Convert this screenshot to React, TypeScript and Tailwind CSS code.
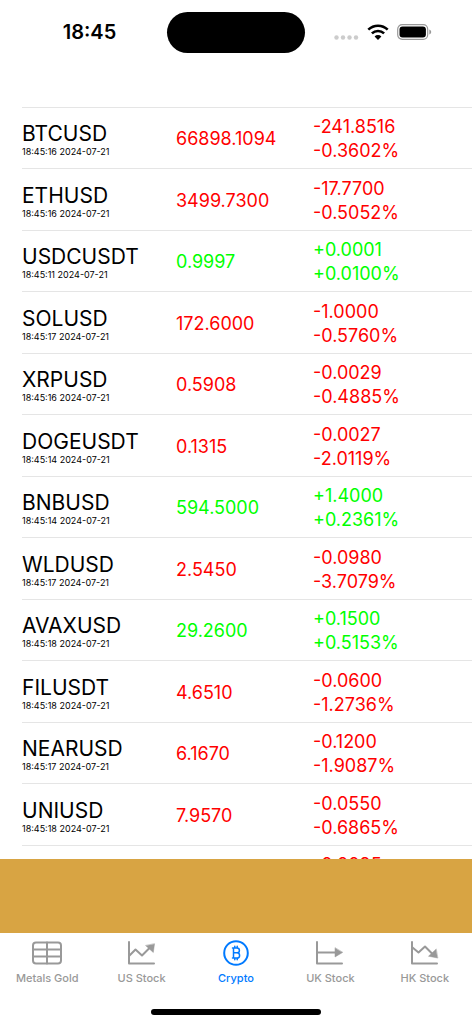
import { useState } from "react";
import type { ReactNode } from "react";
import { clsx } from "clsx";

interface Quote {
  symbol: string;
  time: string;
  price: string;
  change: string;
  percent: string;
}

const quotes: Quote[] = [
  { symbol: "BTCUSD", time: "18:45:16 2024-07-21", price: "66898.1094", change: "-241.8516", percent: "-0.3602%" },
  { symbol: "ETHUSD", time: "18:45:16 2024-07-21", price: "3499.7300", change: "-17.7700", percent: "-0.5052%" },
  { symbol: "USDCUSDT", time: "18:45:11 2024-07-21", price: "0.9997", change: "+0.0001", percent: "+0.0100%" },
  { symbol: "SOLUSD", time: "18:45:17 2024-07-21", price: "172.6000", change: "-1.0000", percent: "-0.5760%" },
  { symbol: "XRPUSD", time: "18:45:16 2024-07-21", price: "0.5908", change: "-0.0029", percent: "-0.4885%" },
  { symbol: "DOGEUSDT", time: "18:45:14 2024-07-21", price: "0.1315", change: "-0.0027", percent: "-2.0119%" },
  { symbol: "BNBUSD", time: "18:45:14 2024-07-21", price: "594.5000", change: "+1.4000", percent: "+0.2361%" },
  { symbol: "WLDUSD", time: "18:45:17 2024-07-21", price: "2.5450", change: "-0.0980", percent: "-3.7079%" },
  { symbol: "AVAXUSD", time: "18:45:18 2024-07-21", price: "29.2600", change: "+0.1500", percent: "+0.5153%" },
  { symbol: "FILUSDT", time: "18:45:18 2024-07-21", price: "4.6510", change: "-0.0600", percent: "-1.2736%" },
  { symbol: "NEARUSD", time: "18:45:17 2024-07-21", price: "6.1670", change: "-0.1200", percent: "-1.9087%" },
  { symbol: "UNIUSD", time: "18:45:18 2024-07-21", price: "7.9570", change: "-0.0550", percent: "-0.6865%" },
  { symbol: "DOTUSD", time: "18:45:18 2024-07-21", price: "6.1095", change: "-0.0095", percent: "-0.1552%" },
];

function TabIcon({ children }: { children: ReactNode }) {
  return (
    <svg viewBox="0 0 32 28" className="h-7 w-8" fill="none" stroke="currentColor" strokeWidth="2" strokeLinecap="round" strokeLinejoin="round" aria-hidden="true">
      {children}
    </svg>
  );
}

const tabs = [
  {
    label: "Metals Gold",
    icon: (
      <TabIcon>
        <rect x="2" y="3.500" width="28" height="21" rx="3" />
        <path d="M16 3.500v21M2 10.500h28M2 17.500h28" />
      </TabIcon>
    ),
  },
  {
    label: "US Stock",
    icon: (
      <TabIcon>
        <path d="M3 3v21.500h25M3.500 16.500l6-6 6.500 6 8-8" />
        <path d="M28.500 5l-1.200 8.500-7.500-6.800z" fill="currentColor" strokeWidth="0.500" />
      </TabIcon>
    ),
  },
  {
    label: "Crypto",
    icon: (
      <TabIcon>
        <circle cx="16" cy="14" r="11.800" />
        <path d="M12.500 9h4.500a2.400 2.400 0 0 1 0 4.800h-3.500m3.500 0a2.600 2.600 0 0 1 0 5.200h-4.500M13.500 9v10M14.800 7.200v1.800M17.200 7.200v1.800M14.800 19v1.800M17.200 19v1.800" strokeWidth="1.500" />
      </TabIcon>
    ),
  },
  {
    label: "UK Stock",
    icon: (
      <TabIcon>
        <path d="M3 3v21.500h25M3.500 13.500h18" />
        <path d="M28.500 13.500l-7.500 4.500V9z" fill="currentColor" strokeWidth="0.500" />
      </TabIcon>
    ),
  },
  {
    label: "HK Stock",
    icon: (
      <TabIcon>
        <path d="M3 3v21.500h25M3.500 8.500l6 5 6.500-6 8 8" />
        <path d="M28.500 19l-9-1.800 7.500-7z" fill="currentColor" strokeWidth="0.500" />
      </TabIcon>
    ),
  },
];

function StatusBar() {
  return (
    <header className="grid h-[107px] shrink-0 grid-cols-[1fr_138px_1fr] items-start pt-3">
      <div className="flex h-10 items-center justify-center pl-3 text-[20px] font-semibold">18:45</div>
      <div className="h-[41px] rounded-full bg-black" />
      <div className="flex h-10 items-center justify-center gap-2 pr-3">
        <svg viewBox="0 0 26 16" className="h-4 w-[26px]" fill="#cccccc" aria-hidden="true">
          <circle cx="3.500" cy="13.500" r="2.200" />
          <circle cx="10" cy="13.500" r="2.200" />
          <circle cx="16.500" cy="13.500" r="2.200" />
          <circle cx="23" cy="13.500" r="2.200" />
        </svg>
        <svg viewBox="0 0 22 16" className="h-4 w-[22px]" fill="none" stroke="black" strokeWidth="2.600" aria-hidden="true">
          <path d="M1.300 5.600a14 14 0 0 1 19.400 0" />
          <path d="M4.900 9.400a8.800 8.800 0 0 1 12.200 0" />
          <path d="M11 16l-3.400-3.500a4.800 4.800 0 0 1 6.800 0z" fill="black" stroke="none" />
        </svg>
        <svg viewBox="0 0 35 16" className="h-4 w-[35px]" aria-hidden="true">
          <rect x="0.700" y="0.700" width="30" height="14.600" rx="4.500" fill="none" stroke="#999999" strokeWidth="1.200" />
          <rect x="2.500" y="2.500" width="26.400" height="11" rx="3" fill="black" />
          <path d="M32.300 5.500c2.500 1 2.500 4 0 5z" fill="#999999" />
        </svg>
      </div>
    </header>
  );
}

function QuoteRow({ quote }: { quote: Quote }) {
  const color = quote.change.startsWith("+") ? "text-[#00ff00]" : "text-[#ff0000]";

  return (
    <tr className="odd:h-[61px] even:h-[62px]">
      <td className="border-t border-[#e5e5e5] p-0 pt-1">
        <div className="text-[21px] leading-6">{quote.symbol}</div>
        <div className="text-[9px] leading-3">{quote.time}</div>
      </td>
      <td className={clsx("border-t border-[#e5e5e5] p-0 pt-px text-[18px]", color)}>{quote.price}</td>
      <td className={clsx("border-t border-[#e5e5e5] p-0 pt-[2px] text-[18px] leading-6", color)}>
        <div>{quote.change}</div>
        <div>{quote.percent}</div>
      </td>
    </tr>
  );
}

export default function App() {
  const [active, setActive] = useState("Crypto");

  return (
    <div className="flex h-screen flex-col overflow-hidden bg-white font-['Inter',sans-serif] text-black">
      <StatusBar />

      <main className="min-h-0 flex-1 overflow-hidden pl-[22px]">
        <table className="w-full table-fixed border-separate border-spacing-0 text-left">
          <colgroup>
            <col className="w-[154px]" />
            <col className="w-[137px]" />
            <col />
          </colgroup>
          <tbody>
            {quotes.map((quote) => (
              <QuoteRow key={quote.symbol} quote={quote} />
            ))}
          </tbody>
        </table>
      </main>

      {/* Ad banner */}
      <div className="h-[74px] shrink-0 bg-[#d8a443]" />

      <footer className="flex h-[91px] shrink-0 flex-col items-center justify-between pb-[9px]">
        <nav className="grid w-full grid-cols-5 pt-[6px]">
          {tabs.map((tab) => (
            <button
              key={tab.label}
              type="button"
              onClick={() => setActive(tab.label)}
              className={clsx(
                "flex flex-col items-center gap-[3px] text-[11px] leading-4 font-medium",
                active === tab.label ? "text-[#007aff]" : "text-[#999999]"
              )}
            >
              {tab.icon}
              {tab.label}
            </button>
          ))}
        </nav>
        <div className="h-[6px] w-[170px] rounded-full bg-black" />
      </footer>
    </div>
  );
}
